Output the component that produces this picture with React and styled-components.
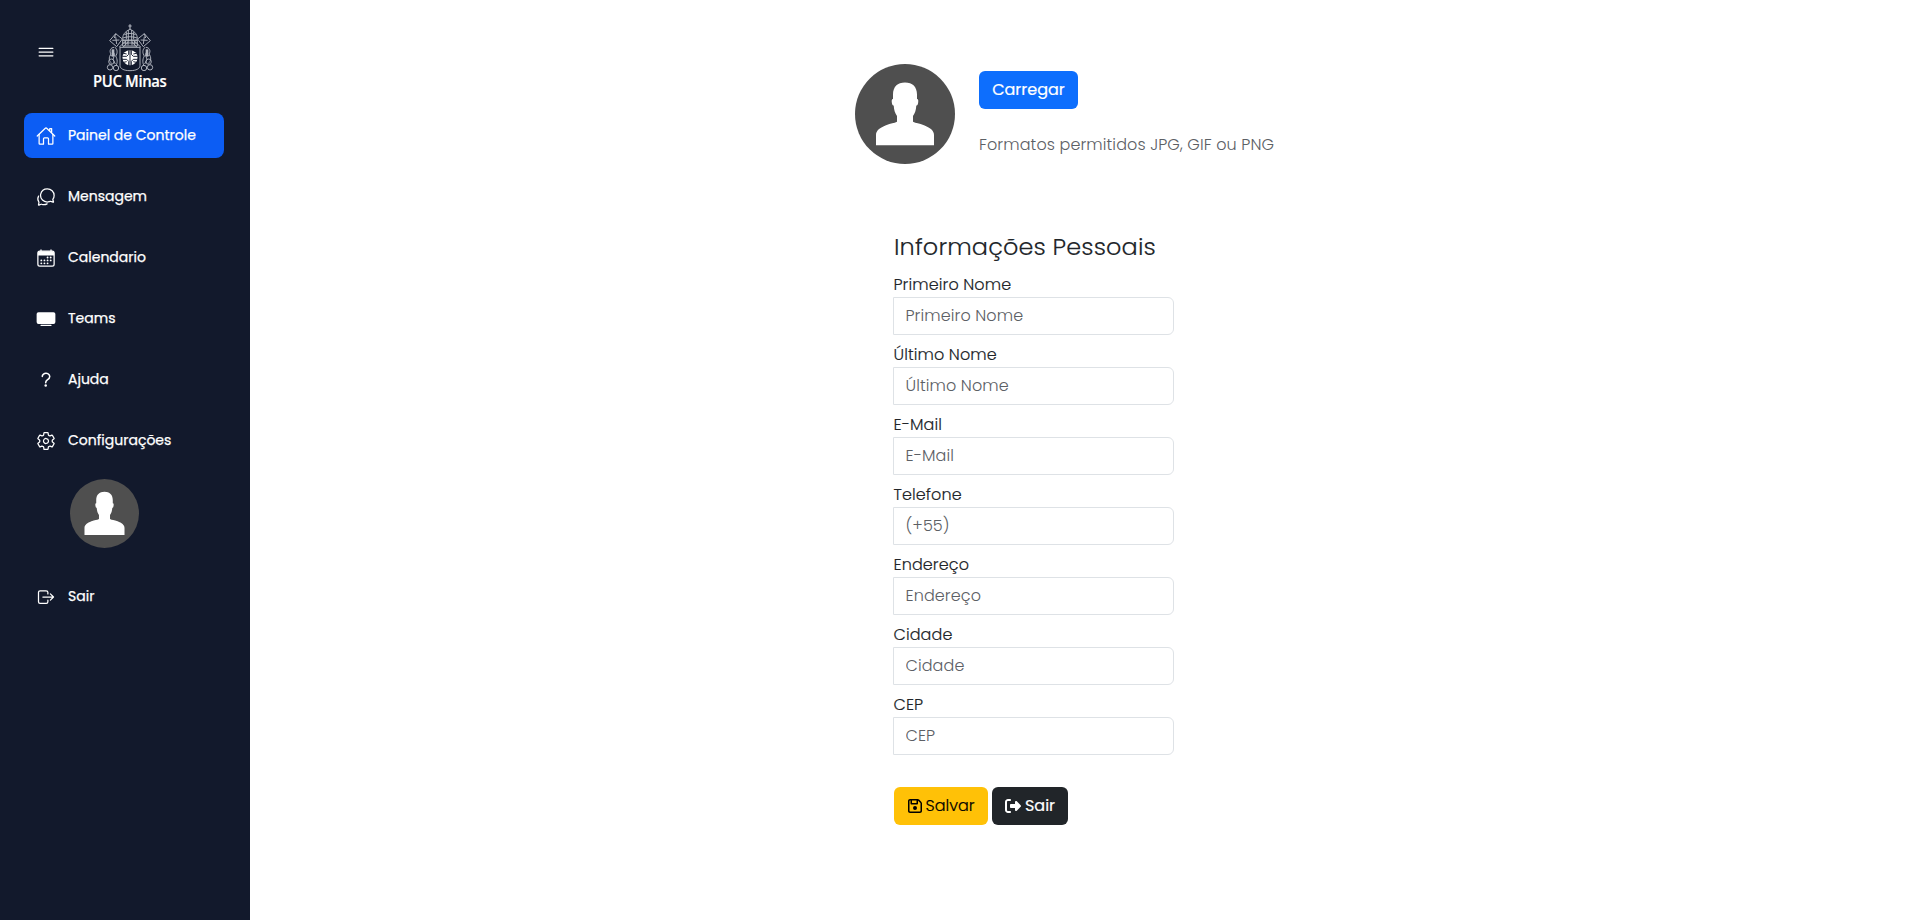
import React from "react";
import styled, { createGlobalStyle } from "styled-components";
import {
  IoMenuOutline,
  IoHomeOutline,
  IoChatbubblesOutline,
  IoTv,
  IoHelpOutline,
  IoSettingsOutline,
  IoLogOutOutline,
} from "react-icons/io5";
import { FaRegFloppyDisk, FaRightFromBracket } from "react-icons/fa6";

const GlobalStyle = createGlobalStyle`
  *, *::before, *::after { box-sizing: border-box; }
  body {
    margin: 0;
    background: #fff;
    color: #212529;
    font-family: Poppins, Inter, sans-serif;
    font-size: 16px;
    line-height: 24px;
  }
`;

const Page = styled.div`
  display: flex;
  min-height: 920px;
`;

const Sidebar = styled.aside`
  flex: 0 0 250px;
  padding: 24px 26px 0 24px;
  background: #12192c;
  color: #fff;
`;

const Brand = styled.div`
  display: flex;
  height: 69px;
  padding-left: 12px;
`;

const MenuButton = styled.button`
  display: flex;
  width: 20px;
  height: 20px;
  margin: 18px 37px 0 0;
  padding: 0;
  border: 0;
  background: none;
  color: inherit;
  font-size: 20px;
`;

const Logo = styled.div`
  display: flex;
  flex-direction: column;
  align-items: center;
  width: 73px;
`;

const LogoName = styled.span`
  margin-top: -2px;
  font: 600 16.5px/22px "Open Sans", sans-serif;
  letter-spacing: -0.4px;
  white-space: nowrap;
  transform: scaleX(0.9);
  -webkit-text-stroke: 0.2px currentColor;
`;

const Nav = styled.nav`
  display: flex;
  flex-direction: column;
  gap: 16px;
  margin-top: 20px;
`;

const NavLink = styled.a`
  display: flex;
  align-items: center;
  gap: 12px;
  height: 45px;
  padding: 0 12px;
  border-radius: 8px;
  background: ${(p) => (p.$active ? "#0c5df4" : "transparent")};
  color: #fff;

  svg {
    flex: none;
    width: 20px;
    height: 20px;
    margin-top: 1px;
  }
`;

const NavText = styled.span`
  padding-bottom: 1px;
  font-size: 14px;
  font-weight: 400;
  line-height: 21px;
  white-space: nowrap;
  -webkit-text-stroke: 0.25px currentColor;
`;

const SidebarAvatar = styled.div`
  display: flex;
  height: 69px;
  margin: 16px 0 26px 46px;
`;

const Main = styled.main`
  flex: 1;
  padding: 64px 0 0 605px;
`;

const Profile = styled.section`
  display: flex;
  gap: 24px;
`;

const Upload = styled.div`
  display: flex;
  flex-direction: column;
  align-items: flex-start;
  gap: 24px;
  padding-top: 7px;
`;

const variants = {
  primary: { background: "#0d6efd", color: "#fff", weight: 400 },
  warning: { background: "#ffc107", color: "#000", weight: 300 },
  dark: { background: "#212529", color: "#fff", weight: 400 },
};

const Button = styled.button`
  display: inline-flex;
  align-items: center;
  justify-content: center;
  gap: 4px;
  width: ${(p) => p.$width}px;
  height: 38px;
  padding: 0;
  border: 0;
  border-radius: 6px;
  background: ${(p) => variants[p.$variant].background};
  color: ${(p) => variants[p.$variant].color};
  font: inherit;
  font-weight: ${(p) => variants[p.$variant].weight};
  -webkit-text-stroke: 0.2px currentColor;
`;

const Hint = styled.p`
  margin: 0;
  color: #5c6065;
  font-weight: 300;
  letter-spacing: 0.1px;
`;

const Form = styled.form`
  width: 281px;
  margin: 67px 0 0 38px;
`;

const Title = styled.h4`
  margin: 0 0 9px;
  padding-left: 1px;
  font-size: 24px;
  font-weight: 300;
  line-height: 32px;
  letter-spacing: 0.12px;
  -webkit-text-stroke: 0.15px currentColor;
`;

const Field = styled.div`
  display: flex;
  flex-direction: column;
  height: 70px;
`;

const Label = styled.label`
  height: 25px;
  padding-left: 0.5px;
  line-height: 26px;
  font-weight: 300;
  letter-spacing: 0.1px;
  -webkit-text-stroke: 0.15px currentColor;
`;

const Input = styled.input`
  height: 38px;
  padding: 5px 12px 7px 11.5px;
  border: 1px solid #dee2e6;
  border-radius: 0 6px 6px 0;
  outline: none;
  color: #212529;
  font: inherit;
  font-weight: 300;
  letter-spacing: 0.1px;

  &::placeholder {
    color: #5c6065;
    opacity: 1;
  }
`;

const Actions = styled.div`
  display: flex;
  gap: 4px;
  margin-top: 25px;
  padding-left: 1px;
`;

const SaveIcon = styled(FaRegFloppyDisk)`
  flex: none;
  width: 14px;
  height: 16px;
`;

const ExitIcon = styled(FaRightFromBracket)`
  flex: none;
  width: 16px;
  height: 16px;
`;

function CalendarIcon() {
  return (
    <svg viewBox="0 0 512 512" fill="none" stroke="currentColor" strokeWidth="32" strokeLinejoin="round">
      <rect x="48" y="80" width="416" height="384" rx="48" />
      <path d="M128 48v32M384 48v32" strokeLinecap="round" />
      <path d="M464 192H48v-64a48 48 0 0 1 48-48h320a48 48 0 0 1 48 48z" fill="currentColor" stroke="none" />
      <g fill="currentColor" stroke="none">
        {[[296, 244], [376, 244], [296, 318], [376, 318], [136, 318], [216, 318], [136, 392], [216, 392], [296, 392]].map(
          ([cx, cy]) => (
            <circle key={`${cx}-${cy}`} cx={cx} cy={cy} r="24" />
          )
        )}
      </g>
    </svg>
  );
}

function Avatar({ size }) {
  return (
    <svg width={size} height={size} viewBox="0 0 100 100">
      <circle cx="50" cy="50" r="50" fill="#4f4f4f" />
      <path
        fill="#fff"
        d="M50 18.4C42.5 18.4 38 22.6 38 30.5V35C36.5 35 36.6 37 36.9 39C37.2 41 37.8 41.6 38.7 41.6C39 46 40 49.5 42 52V57.8C39 59.5 36 59.2 31 61.3C25 63.8 21 66.5 21 71V81.3H79V71C79 66.5 75 63.8 69 61.3C64 59.2 61 59.5 58 57.8V52C60 49.5 61 46 61.3 41.6C62.2 41.6 62.8 41 63.1 39C63.4 37 63.5 35 62 35V30.5C62 22.6 57.5 18.4 50 18.4Z"
      />
    </svg>
  );
}

function Key() {
  return (
    <g>
      <path d="M38 70L72 38M43 76L66 54" />
      <path d="M10 50L28 29L48 45L31 68Z" />
      <path d="M18 49L39 48M28 38L31 60M28 29L24 42" />
    </g>
  );
}

function Supporter() {
  return (
    <g>
      <path d="M24 70C12 70 8 82 14 90C6 100 8 112 16 118M26 70C34 76 34 88 28 96C34 106 34 118 28 126" />
      <path d="M18 78L25 92L20 106L27 120M12 94L22 98" />
      <path d="M20 76V96" strokeWidth="8" />
      <circle cx="11" cy="130" r="8" />
      <circle cx="29" cy="132" r="8" />
      <circle cx="15" cy="113" r="8" />
    </g>
  );
}

function Crest() {
  return (
    <svg width="48" height="48" viewBox="0 0 142 144" fill="none" stroke="#b4b8c2" strokeWidth="2.8">
      <Key />
      <g transform="translate(142 0) scale(-1 1)">
        <Key />
      </g>
      <path d="M71 1V15M66 6H76" strokeWidth="3.5" />
      <path d="M50 50C46 34 56 22 71 16C86 22 96 34 92 50Z" fill="#12192c" />
      <path d="M54 32C64 27 78 27 88 32M50 42C62 37 80 37 92 42M60 23V46M66 18V50M76 18V50M82 23V46" />
      <path d="M49 48H93V66H49ZM49 57H93M57 50V64M65 50V64M77 50V64M85 50V64" />
      <Supporter />
      <g transform="translate(142 0) scale(-1 1)">
        <Supporter />
      </g>
      <path d="M41 70H101V124C101 134 90 140 71 140C52 140 41 134 41 124Z" fill="#12192c" />
      <circle cx="71" cy="101" r="22.5" fill="#fff" stroke="none" />
      <g stroke="#12192c" strokeWidth="2.8">
        <path d="M71 78V124M48 97H61L67 91V79M94 97H81L75 91V79M48 106H61L67 112V124M94 106H81L75 112V124" />
        <path d="M52 88L61 90M90 88L81 90M52 115L61 113M90 115L81 113" />
      </g>
    </svg>
  );
}

const links = [
  { text: "Painel de Controle", Icon: IoHomeOutline, active: true },
  { text: "Mensagem", Icon: IoChatbubblesOutline },
  { text: "Calendario", Icon: CalendarIcon },
  { text: "Teams", Icon: IoTv },
  { text: "Ajuda", Icon: IoHelpOutline },
  { text: "Configurações", Icon: IoSettingsOutline },
];

const fields = [
  { label: "Primeiro Nome" },
  { label: "Último Nome" },
  { label: "E-Mail" },
  { label: "Telefone", hint: "(+55)" },
  { label: "Endereço" },
  { label: "Cidade" },
  { label: "CEP" },
];

function NavItem({ text, Icon, active }) {
  return (
    <NavLink $active={active}>
      <Icon />
      <NavText>{text}</NavText>
    </NavLink>
  );
}

export default function App() {
  return (
    <>
      <GlobalStyle />
      <Page>
        <Sidebar>
          <Brand>
            <MenuButton aria-label="Menu">
              <IoMenuOutline />
            </MenuButton>
            <Logo>
              <Crest />
              <LogoName>PUC Minas</LogoName>
            </Logo>
          </Brand>
          <Nav>
            {links.map((link) => (
              <NavItem key={link.text} {...link} />
            ))}
          </Nav>
          <SidebarAvatar>
            <Avatar size={69} />
          </SidebarAvatar>
          <NavItem text="Sair" Icon={IoLogOutOutline} />
        </Sidebar>
        <Main>
          <Profile>
            <Avatar size={100} />
            <Upload>
              <Button $variant="primary" $width={99}>
                Carregar
              </Button>
              <Hint>Formatos permitidos JPG, GIF ou PNG</Hint>
            </Upload>
          </Profile>
          <Form>
            <Title>Informações Pessoais</Title>
            {fields.map(({ label, hint }) => (
              <Field key={label}>
                <Label>{label}</Label>
                <Input placeholder={hint || label} />
              </Field>
            ))}
            <Actions>
              <Button type="button" $variant="warning" $width={94}>
                <SaveIcon />
                Salvar
              </Button>
              <Button type="button" $variant="dark" $width={76}>
                <ExitIcon />
                Sair
              </Button>
            </Actions>
          </Form>
        </Main>
      </Page>
    </>
  );
}
